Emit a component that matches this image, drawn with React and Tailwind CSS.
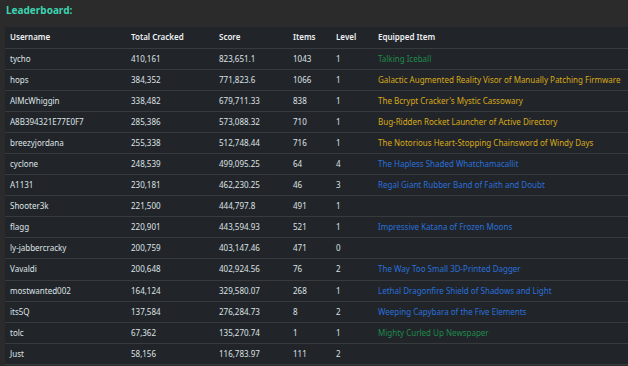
import React from 'react';

const rows = [
    { user: "tycho", cracked: "410,161", score: "823,651.1", items: "1043", level: "1", item: "Talking Iceball", tier: "green" },
    { user: "hops", cracked: "384,352", score: "771,823.6", items: "1066", level: "1", item: "Galactic Augmented Reality Visor of Manually Patching Firmware", tier: "gold" },
    { user: "AlMcWhiggin", cracked: "338,482", score: "679,711.33", items: "838", level: "1", item: "The Bcrypt Cracker's Mystic Cassowary", tier: "gold" },
    { user: "A8B394321E77E0F7", cracked: "285,386", score: "573,088.32", items: "710", level: "1", item: "Bug-Ridden Rocket Launcher of Active Directory", tier: "gold" },
    { user: "breezyjordana", cracked: "255,338", score: "512,748.44", items: "716", level: "1", item: "The Notorious Heart-Stopping Chainsword of Windy Days", tier: "gold" },
    { user: "cyclone", cracked: "248,539", score: "499,095.25", items: "64", level: "4", item: "The Hapless Shaded Whatchamacallit", tier: "blue" },
    { user: "A1131", cracked: "230,181", score: "462,230.25", items: "46", level: "3", item: "Regal Giant Rubber Band of Faith and Doubt", tier: "blue" },
    { user: "Shooter3k", cracked: "221,500", score: "444,797.8", items: "491", level: "1", item: "", tier: "" },
    { user: "flagg", cracked: "220,901", score: "443,594.93", items: "521", level: "1", item: "Impressive Katana of Frozen Moons", tier: "blue" },
    { user: "ly-jabbercracky", cracked: "200,759", score: "403,147.46", items: "471", level: "0", item: "", tier: "" },
    { user: "Vavaldi", cracked: "200,648", score: "402,924.56", items: "76", level: "2", item: "The Way Too Small 3D-Printed Dagger", tier: "blue" },
    { user: "mostwanted002", cracked: "164,124", score: "329,580.07", items: "268", level: "1", item: "Lethal Dragonfire Shield of Shadows and Light", tier: "blue" },
    { user: "its5Q", cracked: "137,584", score: "276,284.73", items: "8", level: "2", item: "Weeping Capybara of the Five Elements", tier: "blue" },
    { user: "tolc", cracked: "67,362", score: "135,270.74", items: "1", level: "1", item: "Mighty Curled Up Newspaper", tier: "green" },
    { user: "Just", cracked: "58,156", score: "116,783.97", items: "111", level: "2", item: "", tier: "" },
];

const tierColor = {
    green: "text-[#1f8a4c]",
    gold: "text-[#d9a91a]",
    blue: "text-[#2a6fdb]",
    "": "",
};

export default function App() {
    return (
        <div className="min-h-screen w-full overflow-hidden bg-[#2b2b2b] text-[8px] text-[#dee2e6] font-['Noto_Sans',sans-serif]">
            <h1 className="px-[6px] pt-[2px] h-[27px] text-[10px] font-bold leading-[16px] text-[#3dd3b0]">
                Leaderboard:
            </h1>

            <table className="ml-[5px] w-[640px] table-fixed border-collapse bg-[#212529]">
                <colgroup>
                    <col className="w-[121px]" />
                    <col className="w-[88px]" />
                    <col className="w-[74px]" />
                    <col className="w-[43px]" />
                    <col className="w-[42px]" />
                    <col />
                </colgroup>
                <thead>
                    <tr className="h-[21px] border-b border-[#373b3e] text-left text-[#eef0f2]">
                        <th className="px-[5px] font-semibold whitespace-nowrap">Username</th>
                        <th className="px-[5px] font-semibold whitespace-nowrap">Total Cracked</th>
                        <th className="px-[5px] font-semibold whitespace-nowrap">Score</th>
                        <th className="px-[5px] font-semibold whitespace-nowrap">Items</th>
                        <th className="px-[5px] font-semibold whitespace-nowrap">Level</th>
                        <th className="px-[5px] font-semibold whitespace-nowrap">Equipped Item</th>
                    </tr>
                </thead>
                <tbody>
                    {rows.map((row, index) => (
                        <tr key={index} className="h-[21.1px] border-b border-[#373b3e]">
                            <td className="px-[5px] whitespace-nowrap">{row.user}</td>
                            <td className="px-[5px]">{row.cracked}</td>
                            <td className="px-[5px]">{row.score}</td>
                            <td className="px-[5px]">{row.items}</td>
                            <td className="px-[5px]">{row.level}</td>
                            <td className={`px-[5px] whitespace-nowrap ${tierColor[row.tier]}`}>{row.item}</td>
                        </tr>
                    ))}
                </tbody>
            </table>
        </div>
    );
}
